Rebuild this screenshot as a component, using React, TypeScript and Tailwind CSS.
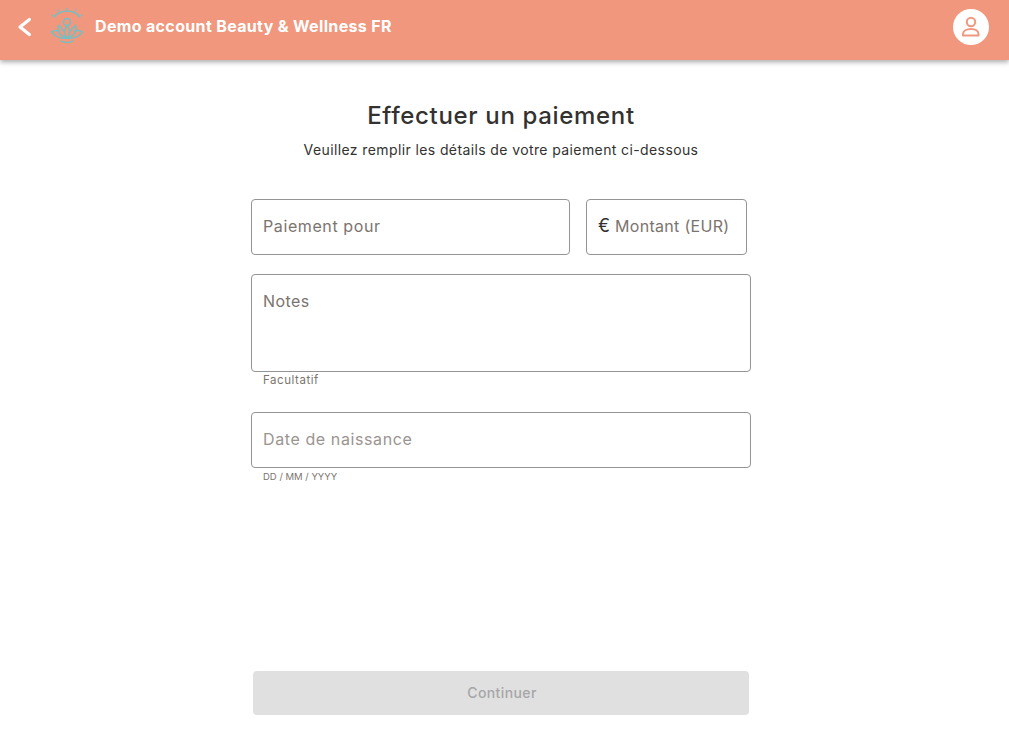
export default function App() {
  return (
    <div className="flex flex-col h-[731px] overflow-hidden bg-white font-['Inter','Liberation_Sans',sans-serif]">
      <header className="flex items-center justify-between h-[60px] shrink-0 bg-[#f0977e] pl-[17px] pr-5 pb-[6px] shadow-[0_2px_5px_rgba(0,0,0,0.35)]">
        <div className="flex items-center">
          <svg width="16" height="20" viewBox="0 0 16 20" fill="none" stroke="#fff" strokeWidth="3.2" strokeLinecap="round" strokeLinejoin="round">
            <path d="M12.4 2.5 L3 10 L12.4 17.5" />
          </svg>
          <svg className="ml-[17px]" width="34" height="38" viewBox="0 0 34 38" fill="none" stroke="#72c0c4" strokeWidth="1.5" strokeLinecap="round">
            <path d="M4 9 A17 17 0 0 1 30 9" />
            <circle cx="17" cy="14" r="3.5" />
            <path d="M17 18 C13.5 21 13.5 27 17 30 C20.5 27 20.5 21 17 18 Z" />
            <path d="M13.7 23 C11.5 20 10 18.5 8.5 17.5 C7 23 9.5 28 17 30" />
            <path d="M20.3 23 C22.5 20 24 18.5 25.5 17.5 C27 23 24.5 28 17 30" />
            <path d="M8.7 23 C6.5 22 4.5 22 1.5 24 C4 28 10 31 17 30 C24 31 30 28 32.5 24 C29.5 22 27.5 22 25.3 23" />
            <path d="M11 33 C14 35 20 35 23 33" />
            <path d="M17 .5 v.4 M8 2 l.3 .4 M26 2 l-.3 .4 M2 7 l.4 .3 M32 7 l-.4 .3" />
          </svg>
          <h1 className="ml-[11px] mb-0.5 text-[16px] font-bold tracking-[0.34px] text-white">Demo account Beauty &amp; Wellness FR</h1>
        </div>
        <div className="flex items-center justify-center w-9 h-9 rounded-full bg-white">
          <svg width="22" height="22" viewBox="0 0 22 22" fill="none" stroke="#f0977e" strokeWidth="2">
            <circle cx="11" cy="6" r="4.2" />
            <path d="M3 19.5 V18 C3 15 6.5 13 11 13 C15.5 13 18.5 15 18.5 18 V19.5 Z" strokeLinejoin="round" />
          </svg>
        </div>
      </header>

      <main className="flex flex-col flex-1 items-center pr-[7px]">
        <h2 className="mt-10 h-8 text-[24px] leading-8 font-medium tracking-[0.67px] text-[#333230]">Effectuer un paiement</h2>
        <p className="mt-2 text-[14px] leading-5 tracking-[0.39px] text-[#333230]">Veuillez remplir les détails de votre paiement ci-dessous</p>

        <form className="flex flex-col w-[500px] mt-[39px]">
          <div className="flex gap-4">
            <input placeholder="Paiement pour" className="w-[319px] h-14 pl-[11px] pr-3 pb-0.5 rounded border border-[#949494] bg-white text-base tracking-[0.6px] outline-none placeholder:text-[#7b746e]" />
            <div className="flex items-center gap-[5px] w-[161px] h-14 pl-[11px] pr-3 pb-0.5 rounded border border-[#949494] bg-white">
              <span className="text-lg text-[#333230]">€</span>
              <input placeholder="Montant (EUR)" className="min-w-0 flex-1 text-base tracking-[0.3px] outline-none placeholder:text-[#7b746e]" />
            </div>
          </div>

          <textarea placeholder="Notes" className="mt-[19px] h-[98px] pl-[11px] pr-3 pt-3.5 rounded border border-[#949494] bg-white text-base tracking-[0.4px] leading-6 outline-none resize-none placeholder:text-[#7b746e]" />
          <p className="mt-px px-3 text-[11.5px] leading-[15px] tracking-[0.55px] text-[#7b746e]">Facultatif</p>

          <input placeholder="Date de naissance" className="mt-6 h-14 pl-[11px] pr-3 pb-0.5 rounded border border-[#949494] bg-white text-base tracking-[0.6px] outline-none placeholder:text-[#9a9490]" />
          <p className="mt-px px-3 text-[9.5px] leading-[15px] text-[#7b746e]">DD / MM / YYYY</p>
        </form>

        <button type="button" disabled className="mt-auto mb-4 w-[496px] h-11 pl-0.5 rounded bg-[#e0e0e0] text-sm font-medium tracking-[0.4px] text-[#a6a6a6]">Continuer</button>
      </main>
    </div>
  );
}
